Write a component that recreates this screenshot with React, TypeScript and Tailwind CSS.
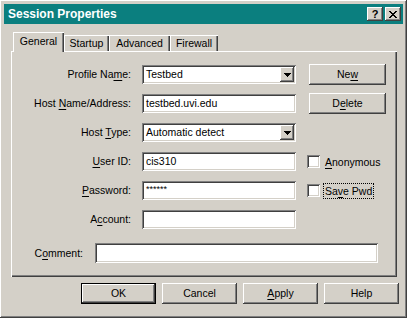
import { ReactNode } from "react";

const raised =
  "shadow-[inset_-1px_-1px_0_#404040,inset_1px_1px_0_#ffffff,inset_-2px_-2px_0_#808080,inset_2px_2px_0_#d4d0c8]";
const sunken =
  "shadow-[inset_1px_1px_0_#808080,inset_-1px_-1px_0_#ffffff,inset_2px_2px_0_#404040,inset_-2px_-2px_0_#d4d0c8]";
const tab = "shadow-[inset_1px_1px_0_#ffffff,inset_-1px_0_0_#404040,inset_-2px_0_0_#808080]";

function U({ children }: { children: ReactNode }) {
  return <span className="underline decoration-1 underline-offset-[2px]">{children}</span>;
}

function Button({ children, className = "" }: { children: ReactNode; className?: string }) {
  return (
    <div className={`flex items-center justify-center bg-[#d4d0c8] ${raised} ${className}`}>
      <span>{children}</span>
    </div>
  );
}

function TextBox({ value = "", className = "" }: { value?: string; className?: string }) {
  return (
    <div className={`flex items-center bg-white pl-[4px] ${sunken} ${className}`}>
      {value}
    </div>
  );
}

function Combo({ value, className = "" }: { value: string; className?: string }) {
  return (
    <div className={`flex items-center bg-white p-[2px] ${sunken} ${className}`}>
      <span className="flex-1 pl-[2px]">{value}</span>
      <div className={`flex h-full w-[14px] items-center justify-center bg-[#d4d0c8] ${raised}`}>
        <svg width="7" height="4" viewBox="0 0 7 4" shapeRendering="crispEdges">
          <path d="M0 0h7v1H0zM1 1h5v1H1zM2 2h3v1H2zM3 3h1v1H3z" fill="#000" />
        </svg>
      </div>
    </div>
  );
}

function Check({ children, focus = false }: { children: ReactNode; focus?: boolean }) {
  return (
    <div className="ml-[11px] flex items-center">
      <div className={`h-[13px] w-[13px] bg-white ${sunken}`} />
      <span
        className={`ml-[3px] px-[1px] leading-[14px] border ${
          focus ? "border-dotted border-black" : "border-transparent"
        }`}
      >
        {children}
      </span>
    </div>
  );
}

function Row({ label, children }: { label: ReactNode; children: ReactNode }) {
  return (
    <div className="flex h-[19px] items-center">
      <div className="w-[120px] text-right">{label}</div>
      {children}
    </div>
  );
}

export default function App() {
  return (
    <div className="h-[318px] w-[407px] bg-[#d4d0c8] font-['Liberation_Sans',Arial,sans-serif] text-[10.5px] leading-none text-black">
      <div className={`flex h-[318px] w-[407px] flex-col p-[4px] ${raised}`}>
        {/* Title bar */}
        <div className="flex h-[20px] shrink-0 items-center bg-[#0b7f7f] pl-[4px] pr-[2px]">
          <span className="flex-1 text-[12px] font-bold text-white">Session Properties</span>
          <div className={`flex h-[14px] w-[16px] items-center justify-center bg-[#d4d0c8] text-[11px] font-bold ${raised}`}>
            ?
          </div>
          <div className={`ml-[2px] flex h-[14px] w-[16px] items-center justify-center bg-[#d4d0c8] ${raised}`}>
            <svg width="8" height="7" viewBox="0 0 8 7" shapeRendering="crispEdges">
              <path
                d="M0 0h2v1H0zM6 0h2v1H6zM1 1h2v1H1zM5 1h2v1H5zM2 2h4v1H2zM3 3h2v1H3zM2 4h4v1H2zM1 5h2v1H1zM5 5h2v1H5zM0 6h2v1H0zM6 6h2v1H6z"
                fill="#000"
              />
            </svg>
          </div>
        </div>

        {/* Tabs */}
        <div className="ml-[9px] mt-[8px] flex h-[19px] items-end">
          <div className={`relative z-10 -mb-[1px] flex h-[20px] w-[51px] items-center justify-center bg-[#d4d0c8] pb-[2px] ${tab}`}>
            General
          </div>
          <div className={`flex h-[16px] w-[45px] items-center justify-center ${tab}`}>Startup</div>
          <div className={`flex h-[16px] w-[61px] items-center justify-center ${tab}`}>Advanced</div>
          <div className={`flex h-[16px] w-[48px] items-center justify-center ${tab}`}>Firewall</div>
        </div>

        {/* Panel */}
        <div className="ml-[7px] flex h-[226px] w-[386px] flex-col gap-[10px] pt-[14px] shadow-[inset_1px_1px_0_#ffffff,inset_-1px_-1px_0_#404040,inset_-2px_-2px_0_#808080]">
          <Row label={<>Profile Na<U>m</U>e:</>}>
            <Combo value="Testbed" className="ml-[11px] h-[19px] w-[154px]" />
            <Button className="ml-[13px] h-[21px] w-[77px]">
              Ne<U>w</U>
            </Button>
          </Row>
          <Row label={<>Host <U>N</U>ame/Address:</>}>
            <TextBox value="testbed.uvi.edu" className="ml-[11px] h-[19px] w-[154px]" />
            <Button className="ml-[13px] h-[21px] w-[77px]">
              D<U>e</U>lete
            </Button>
          </Row>
          <Row label={<>Host <U>T</U>ype:</>}>
            <Combo value="Automatic detect" className="ml-[11px] h-[19px] w-[154px]" />
          </Row>
          <Row label={<><U>U</U>ser ID:</>}>
            <TextBox value="cis310" className="ml-[11px] h-[19px] w-[154px]" />
            <Check>
              <U>A</U>nonymous
            </Check>
          </Row>
          <Row label={<><U>P</U>assword:</>}>
            <TextBox value="******" className="ml-[11px] h-[19px] w-[154px] pb-[3px] text-[9px]" />
            <Check focus>
              Sa<U>v</U>e Pwd
            </Check>
          </Row>
          <Row label={<>A<U>c</U>count:</>}>
            <TextBox className="ml-[11px] h-[19px] w-[154px]" />
          </Row>
          <div className="mt-[4px] flex h-[20px] items-center">
            <div className="w-[72px] text-right">
              C<U>o</U>mment:
            </div>
            <TextBox className="ml-[12px] h-[20px] w-[283px]" />
          </div>
        </div>

        {/* Dialog buttons */}
        <div className="mr-[4px] mt-[6px] flex justify-end gap-[6px]">
          <div className="h-[21px] w-[75px] border border-black">
            <Button className="h-full w-full">OK</Button>
          </div>
          <Button className="h-[21px] w-[75px]">Cancel</Button>
          <Button className="h-[21px] w-[75px]">
            <U>A</U>pply
          </Button>
          <Button className="h-[21px] w-[75px]">Help</Button>
        </div>
      </div>
    </div>
  );
}
